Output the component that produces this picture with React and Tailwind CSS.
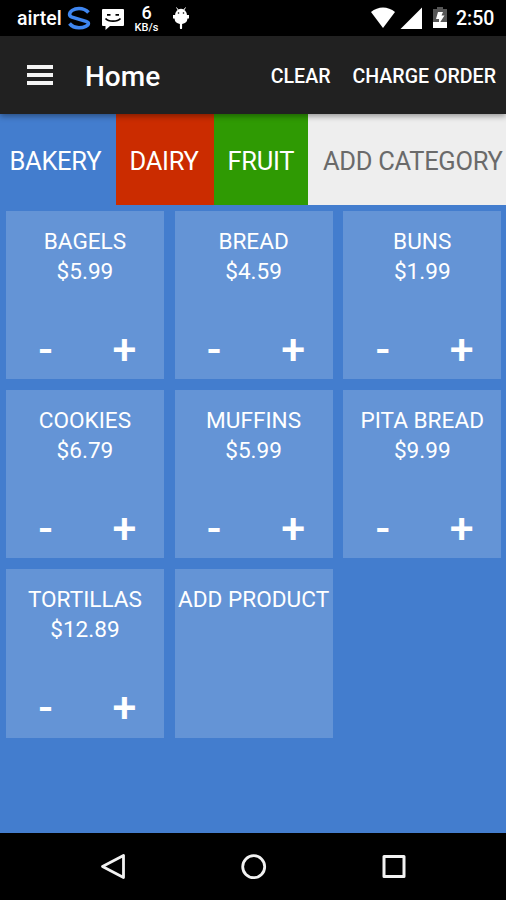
import React from "react";

const CATEGORIES = [
  { name: "BAKERY", className: "w-[115.5px] bg-[#437dce] pl-[9.5px] text-white" },
  { name: "DAIRY", className: "w-[98px] bg-[#cb2c00] pl-[14px] text-white" },
  { name: "FRUIT", className: "w-[94.5px] bg-[#2f9a03] pl-[14px] text-white" },
  { name: "ADD CATEGORY", className: "w-[198px] bg-[#eeeeee] pl-[15px] text-[#6a6a6a]" },
];

const PRODUCTS = [
  { name: "BAGELS", price: "$5.99" },
  { name: "BREAD", price: "$4.59" },
  { name: "BUNS", price: "$1.99" },
  { name: "COOKIES", price: "$6.79" },
  { name: "MUFFINS", price: "$5.99" },
  { name: "PITA BREAD", price: "$9.99" },
  { name: "TORTILLAS", price: "$12.89" },
];

function StatusBar() {
  return (
    <div className="flex h-9 shrink-0 items-start bg-black text-white">
      <span className="ml-[17px] mt-[7px] w-[50px] text-[19.5px] leading-6 font-medium">airtel</span>
      <svg className="mt-[6px] h-6 w-6" viewBox="0 0 24 24" fill="none" stroke="#3f86f0" strokeWidth="3.6">
        <path d="M21.500 6.500C19 3.800 16 2.500 12 2.500 6.500 2.500 2.600 5.500 2.600 8.500c0 1.200 1 2 2.400 2.600l14 4.300c1.500.5 2.400 1.200 2.400 2 0 2-4 4.300-9.400 4.300C8 21.700 4.800 20.300 2.500 17.500" />
      </svg>
      <svg className="ml-[11px] mt-[9px] h-[21px] w-[22px]" viewBox="0 0 22 21">
        <path d="M1 0h20A1 1 0 0 1 22 1v15a1 1 0 0 1-1 1H8l-4.500 4v-4H1a1 1 0 0 1-1-1V1A1 1 0 0 1 1 0z" fill="#fff" />
        <path d="M5 5h3.500v1.800H5zM13.500 5H17v1.800h-3.500z" fill="#000" />
        <path d="M3.500 9.500c3 3.500 12 3.500 15 0" fill="none" stroke="#000" strokeWidth="1.800" />
      </svg>
      <div className="ml-[9px] mt-[4px] flex w-[27px] flex-col items-center">
        <span className="text-[18px] leading-[17px] font-medium">6</span>
        <span className="mt-[1px] text-[11px] leading-[11px] font-medium">KB/s</span>
      </div>
      <svg className="ml-[13px] mt-[7px] h-[22px] w-4" viewBox="0 0 16 22">
        <path d="M3.500.500l2 3M12.500.500l-2 3" stroke="#fff" strokeWidth="1" />
        <path d="M2 8.500a6 6.700 0 0 1 12 0z" fill="#fff" />
        <path d="M0 8h16v3.500H0z" fill="#fff" />
        <path d="M1.500 8h13v3.500a6.500 6 0 0 1-5.400 5.500V21a1 1 0 0 1-2.200 0v-4a6.500 6 0 0 1-5.400-5.500z" fill="#fff" />
        <circle cx="5.500" cy="6" r=".8" fill="#000" />
        <circle cx="10.500" cy="6" r=".8" fill="#000" />
      </svg>
      <svg className="ml-[181px] mt-[7px] h-[22px] w-[26px]" viewBox="0 0 26 22">
        <path d="M1 5C8-1 18-1 25 5L13 21z" fill="#fff" />
      </svg>
      <svg className="ml-[4px] mt-[7px] h-[22px] w-[22px]" viewBox="0 0 22 22">
        <path d="M22 0.500v21.500H0.500z" fill="#fff" />
      </svg>
      <svg className="ml-[11px] mt-[7px] h-[22px] w-[14px]" viewBox="0 0 14 22">
        <path d="M4 0h6v2h4v13H0V2h4z" fill="#565656" />
        <path d="M0 15h14v6H0z" fill="#fff" />
        <path d="M5 5h5L8.500 8.500h3L6 17v-5H3z" fill="#fff" />
      </svg>
      <span className="ml-[9px] mt-[7px] text-[19.5px] leading-6 font-medium">2:50</span>
    </div>
  );
}

function AppBar() {
  return (
    <header className="relative flex h-[78px] shrink-0 items-center bg-[#212121] text-white shadow-[0_2px_6px_rgba(0,0,0,0.4)]">
      <button className="ml-[27px] flex w-[26px] flex-col gap-[4px] pb-[1px]">
        <span className="h-[4px] w-full bg-[#f4f4f4]" />
        <span className="h-[4px] w-full bg-[#f4f4f4]" />
        <span className="h-[4px] w-full bg-[#f4f4f4]" />
      </button>
      <h1 className="ml-[32px] pt-[4px] text-[28px] leading-8 font-medium">Home</h1>
      <div className="ml-auto flex gap-[22px] pt-[4px] pr-[10px] text-[19.6px] leading-6 font-medium">
        <button>CLEAR</button>
        <button>CHARGE ORDER</button>
      </div>
    </header>
  );
}

function CategoryTabs() {
  return (
    <nav className="flex h-[91px] shrink-0 text-[25.5px] tracking-[-0.3px]">
      {CATEGORIES.map((category) => (
        <button
          key={category.name}
          className={`shrink-0 overflow-hidden pt-[3px] text-left whitespace-nowrap ${category.className}`}
        >
          {category.name}
        </button>
      ))}
    </nav>
  );
}

function ProductTile({ name, price }) {
  return (
    <div className="flex h-[168.5px] flex-col bg-[#6494d6] pt-[16px] text-center text-[22.6px] leading-[30px] whitespace-nowrap text-white">
      <div>{name}</div>
      {price && (
        <>
          <div>{price}</div>
          <div className="mt-[37px] grid grid-cols-2 text-[43px] leading-[50px] font-medium">
            <button>-</button>
            <button>+</button>
          </div>
        </>
      )}
    </div>
  );
}

function NavBar() {
  return (
    <div className="flex h-[67px] shrink-0 items-start bg-black pt-[20px] pl-[100px]">
      <svg className="h-7 w-7" viewBox="0 0 28 28" fill="none" stroke="#f2f2f2" strokeWidth="2.800" strokeLinejoin="round">
        <path d="M23.500 2.500v22L2.500 13.500z" />
      </svg>
      <svg className="ml-[112px] h-7 w-7" viewBox="0 0 28 28" fill="none" stroke="#f2f2f2" strokeWidth="2.800">
        <circle cx="13.700" cy="13.700" r="11" />
      </svg>
      <svg className="ml-[112px] h-7 w-7" viewBox="0 0 28 28" fill="none" stroke="#f2f2f2" strokeWidth="3" strokeLinejoin="round">
        <path d="M4 3.500h20v20H4z" />
      </svg>
    </div>
  );
}

export default function App() {
  return (
    <div className="flex h-[900px] w-[506px] flex-col overflow-hidden bg-[#437dce] font-['Roboto',sans-serif]">
      <StatusBar />
      <AppBar />
      <CategoryTabs />
      <main className="grid flex-1 grid-cols-3 content-start gap-x-[10.75px] gap-y-[10.8px] pt-[5.5px] pr-[4.8px] pl-[6px]">
        {PRODUCTS.map((product) => (
          <ProductTile key={product.name} name={product.name} price={product.price} />
        ))}
        <ProductTile name="ADD PRODUCT" />
      </main>
      <NavBar />
    </div>
  );
}
